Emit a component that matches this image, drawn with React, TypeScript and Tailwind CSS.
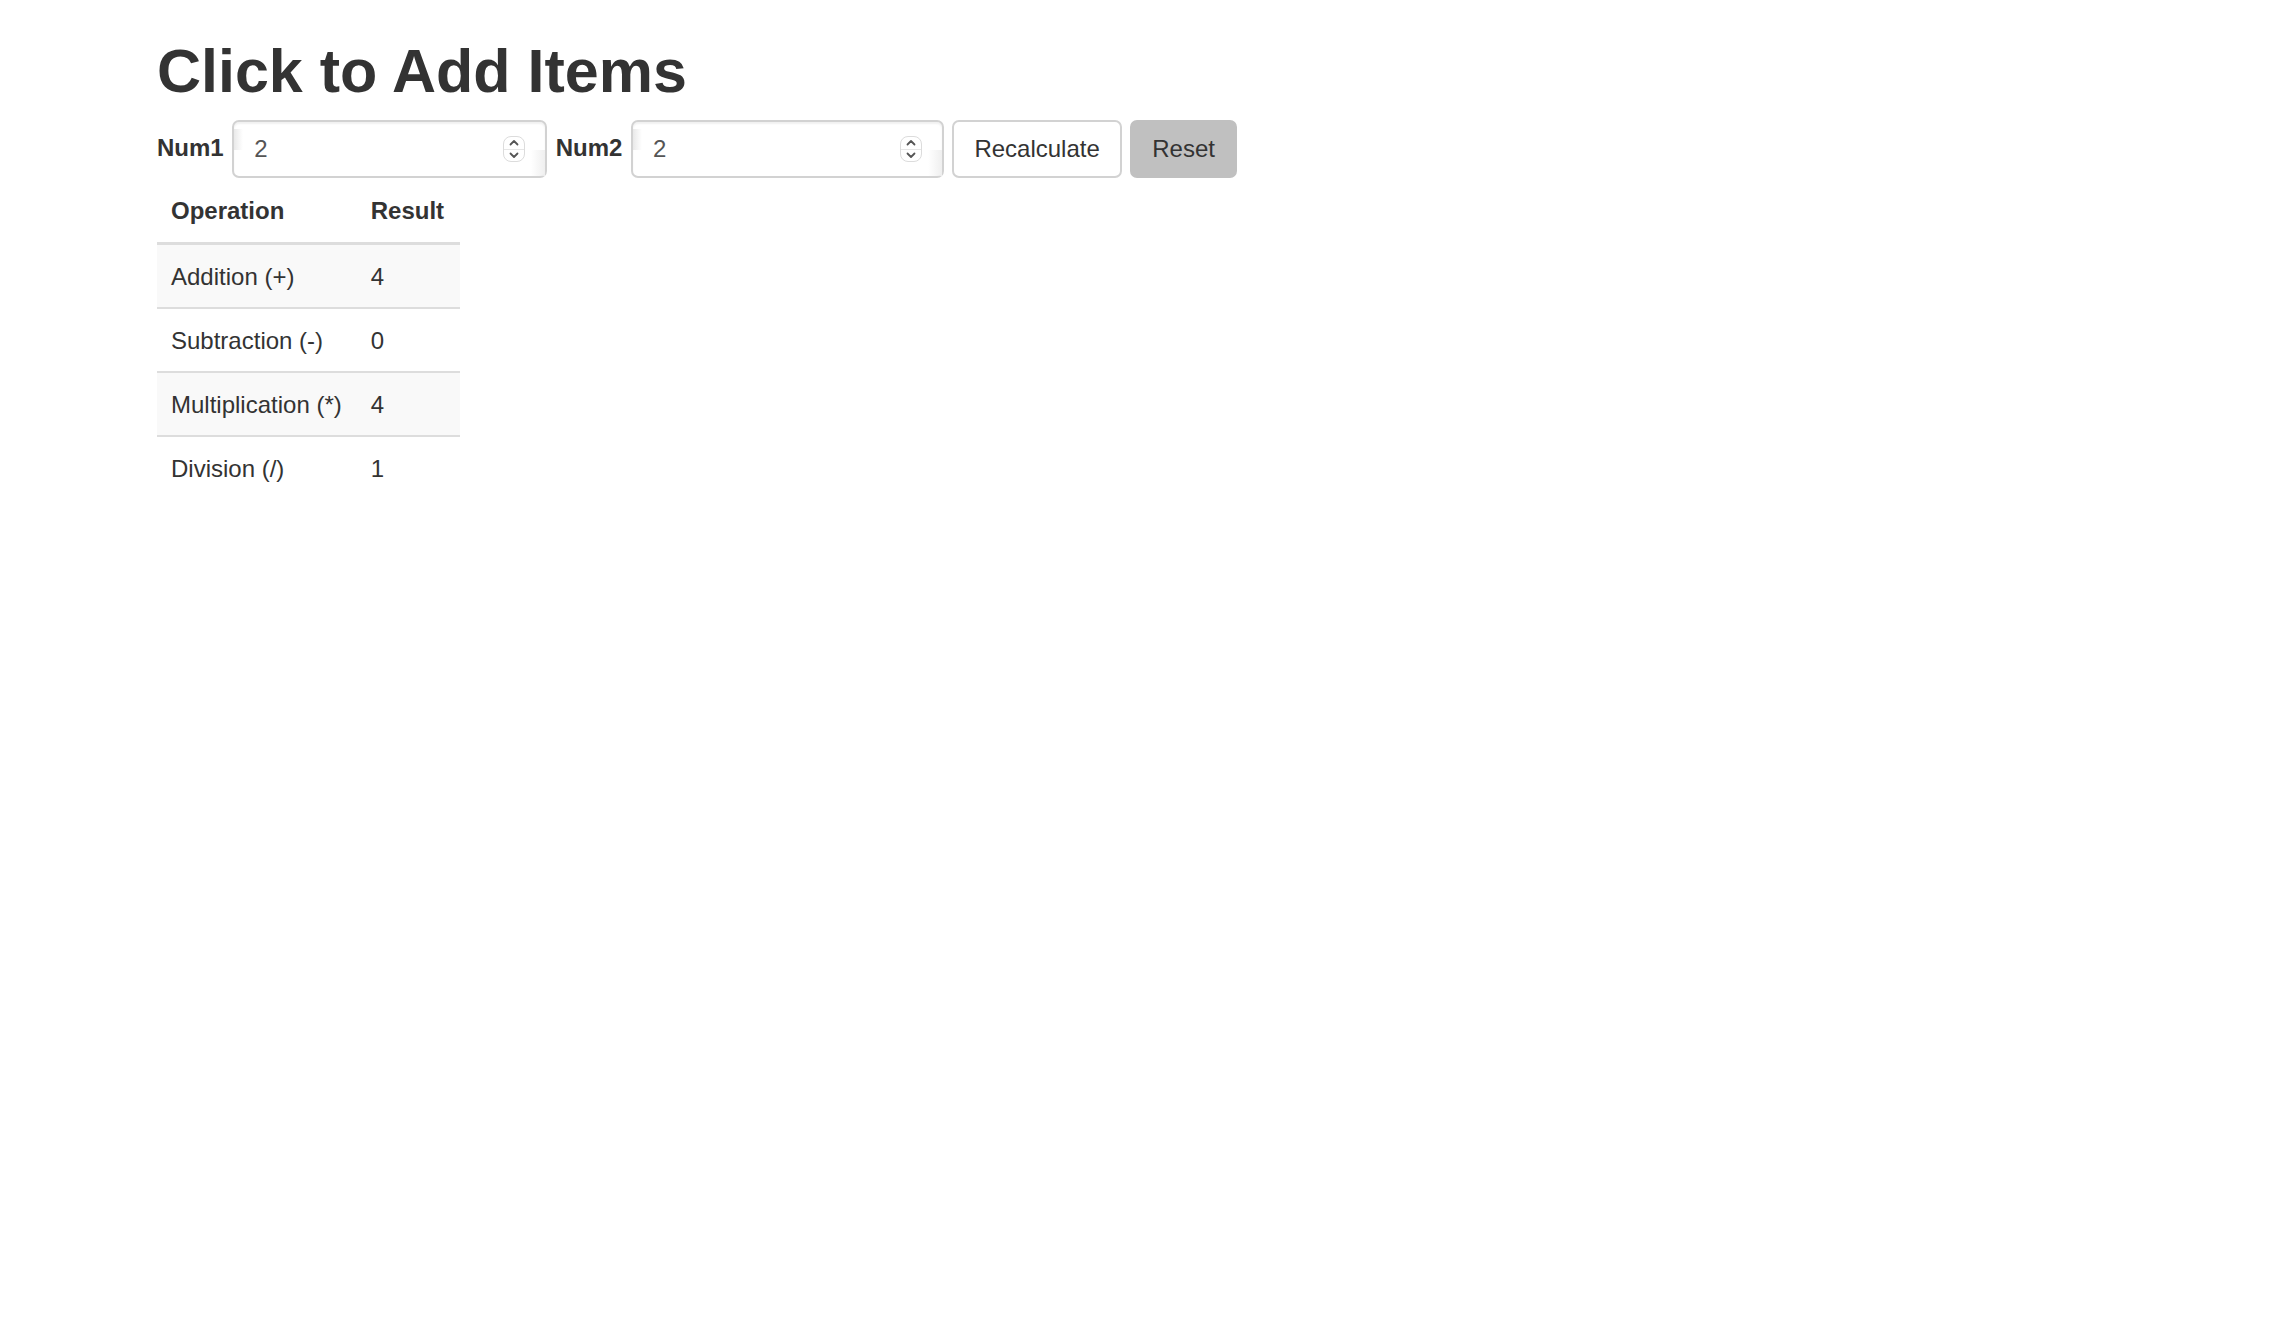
import { useState } from "react";

type Op = { label: string; fn: (a: number, b: number) => number };

const OPS: Op[] = [
  { label: "Addition (+)", fn: (a, b) => a + b },
  { label: "Subtraction (-)", fn: (a, b) => a - b },
  { label: "Multiplication (*)", fn: (a, b) => a * b },
  { label: "Division (/)", fn: (a, b) => a / b },
];

function Spinner() {
  return (
    <div className="pointer-events-none absolute right-[22px] top-1/2 flex h-[26px] w-[22px] -translate-y-1/2 flex-col overflow-hidden rounded-[8px] border border-[#dcdcdc] bg-white">
      <div className="flex flex-1 items-center justify-center border-b border-[#e6e6e6]">
        <svg width="10" height="7" viewBox="0 0 10 7" fill="none">
          <path d="M1.5 5.5 L5 2 L8.5 5.5" stroke="#555" strokeWidth="1.8" strokeLinecap="round" strokeLinejoin="round" />
        </svg>
      </div>
      <div className="flex flex-1 items-center justify-center">
        <svg width="10" height="7" viewBox="0 0 10 7" fill="none">
          <path d="M1.5 1.5 L5 5 L8.5 1.5" stroke="#555" strokeWidth="1.8" strokeLinecap="round" strokeLinejoin="round" />
        </svg>
      </div>
    </div>
  );
}

function NumInput({ value, onChange, width }: { value: string; onChange: (v: string) => void; width: string }) {
  return (
    <div className={`relative h-[58px] ${width}`}>
      <input
        type="number"
        value={value}
        onChange={(e) => onChange(e.target.value)}
        className="h-full w-full rounded-[7px] border-2 border-[#d2d2d2] bg-white px-[20px] text-[24px] text-[#555] shadow-[inset_0_2px_2px_rgba(0,0,0,0.06)] outline-none [appearance:textfield] [&::-webkit-inner-spin-button]:appearance-none [&::-webkit-outer-spin-button]:appearance-none"
      />
      {/* faint edge shading */}
      <div className="pointer-events-none absolute left-[2px] top-[9px] h-[21px] w-[9px] bg-gradient-to-r from-[#e9e9e9] to-transparent" />
      <div className="pointer-events-none absolute bottom-[2px] right-[2px] h-[26px] w-[14px] bg-gradient-to-r from-transparent to-[#efefef]" />
      <Spinner />
    </div>
  );
}

export default function App() {
  const [num1, setNum1] = useState("2");
  const [num2, setNum2] = useState("2");
  const [vals, setVals] = useState({ a: 2, b: 2 });

  return (
    <div className="min-h-screen bg-white pl-[157px] pt-[37px] font-['Liberation_Sans',Arial,sans-serif] text-[24px] text-[#333]">
      <h1 className="mb-[15px] text-[61px] font-bold leading-[68px]">Click to Add Items</h1>

      <div className="flex h-[58px] items-center gap-[8.5px]">
        <label className="mb-[3px] font-bold leading-[34px]">Num1</label>
        <NumInput value={num1} onChange={setNum1} width="w-[315px]" />
        <label className="mb-[3px] font-bold leading-[34px]">Num2</label>
        <NumInput value={num2} onChange={setNum2} width="w-[313px]" />
        <button
          type="button"
          onClick={() => setVals({ a: Number(num1), b: Number(num2) })}
          className="h-[58px] rounded-[7px] border-2 border-[#d2d2d2] bg-white px-[20px] leading-[34px] text-[#333]"
        >
          Recalculate
        </button>
        <button
          type="button"
          onClick={() => {
            setNum1("2");
            setNum2("2");
            setVals({ a: 2, b: 2 });
          }}
          className="h-[58px] rounded-[7px] border-2 border-[#c0c0c0] bg-[#c0c0c0] px-[20px] leading-[34px] text-[#333]"
        >
          Reset
        </button>
      </div>

      <table className="mt-[2px] border-separate border-spacing-0 text-left">
        <thead>
          <tr>
            <th className="border-b-[3px] border-[#ddd] px-[14px] py-[14px] font-bold leading-[34px]">Operation</th>
            <th className="border-b-[3px] border-[#ddd] py-[14px] pl-[14px] pr-[16px] font-bold leading-[34px]">Result</th>
          </tr>
        </thead>
        <tbody>
          {OPS.map((op, i) => {
            const cell =
              (i === 0 ? "" : "border-t-2 border-[#ddd] ") +
              (i % 2 === 0 ? "bg-[#f9f9f9] " : "") +
              "pt-[15px] pb-[13px] leading-[34px]";
            return (
              <tr key={op.label}>
                <td className={cell + " pl-[14px] pr-[15px]"}>{op.label}</td>
                <td className={cell + " px-[14px]"}>{op.fn(vals.a, vals.b)}</td>
              </tr>
            );
          })}
        </tbody>
      </table>
    </div>
  );
}
